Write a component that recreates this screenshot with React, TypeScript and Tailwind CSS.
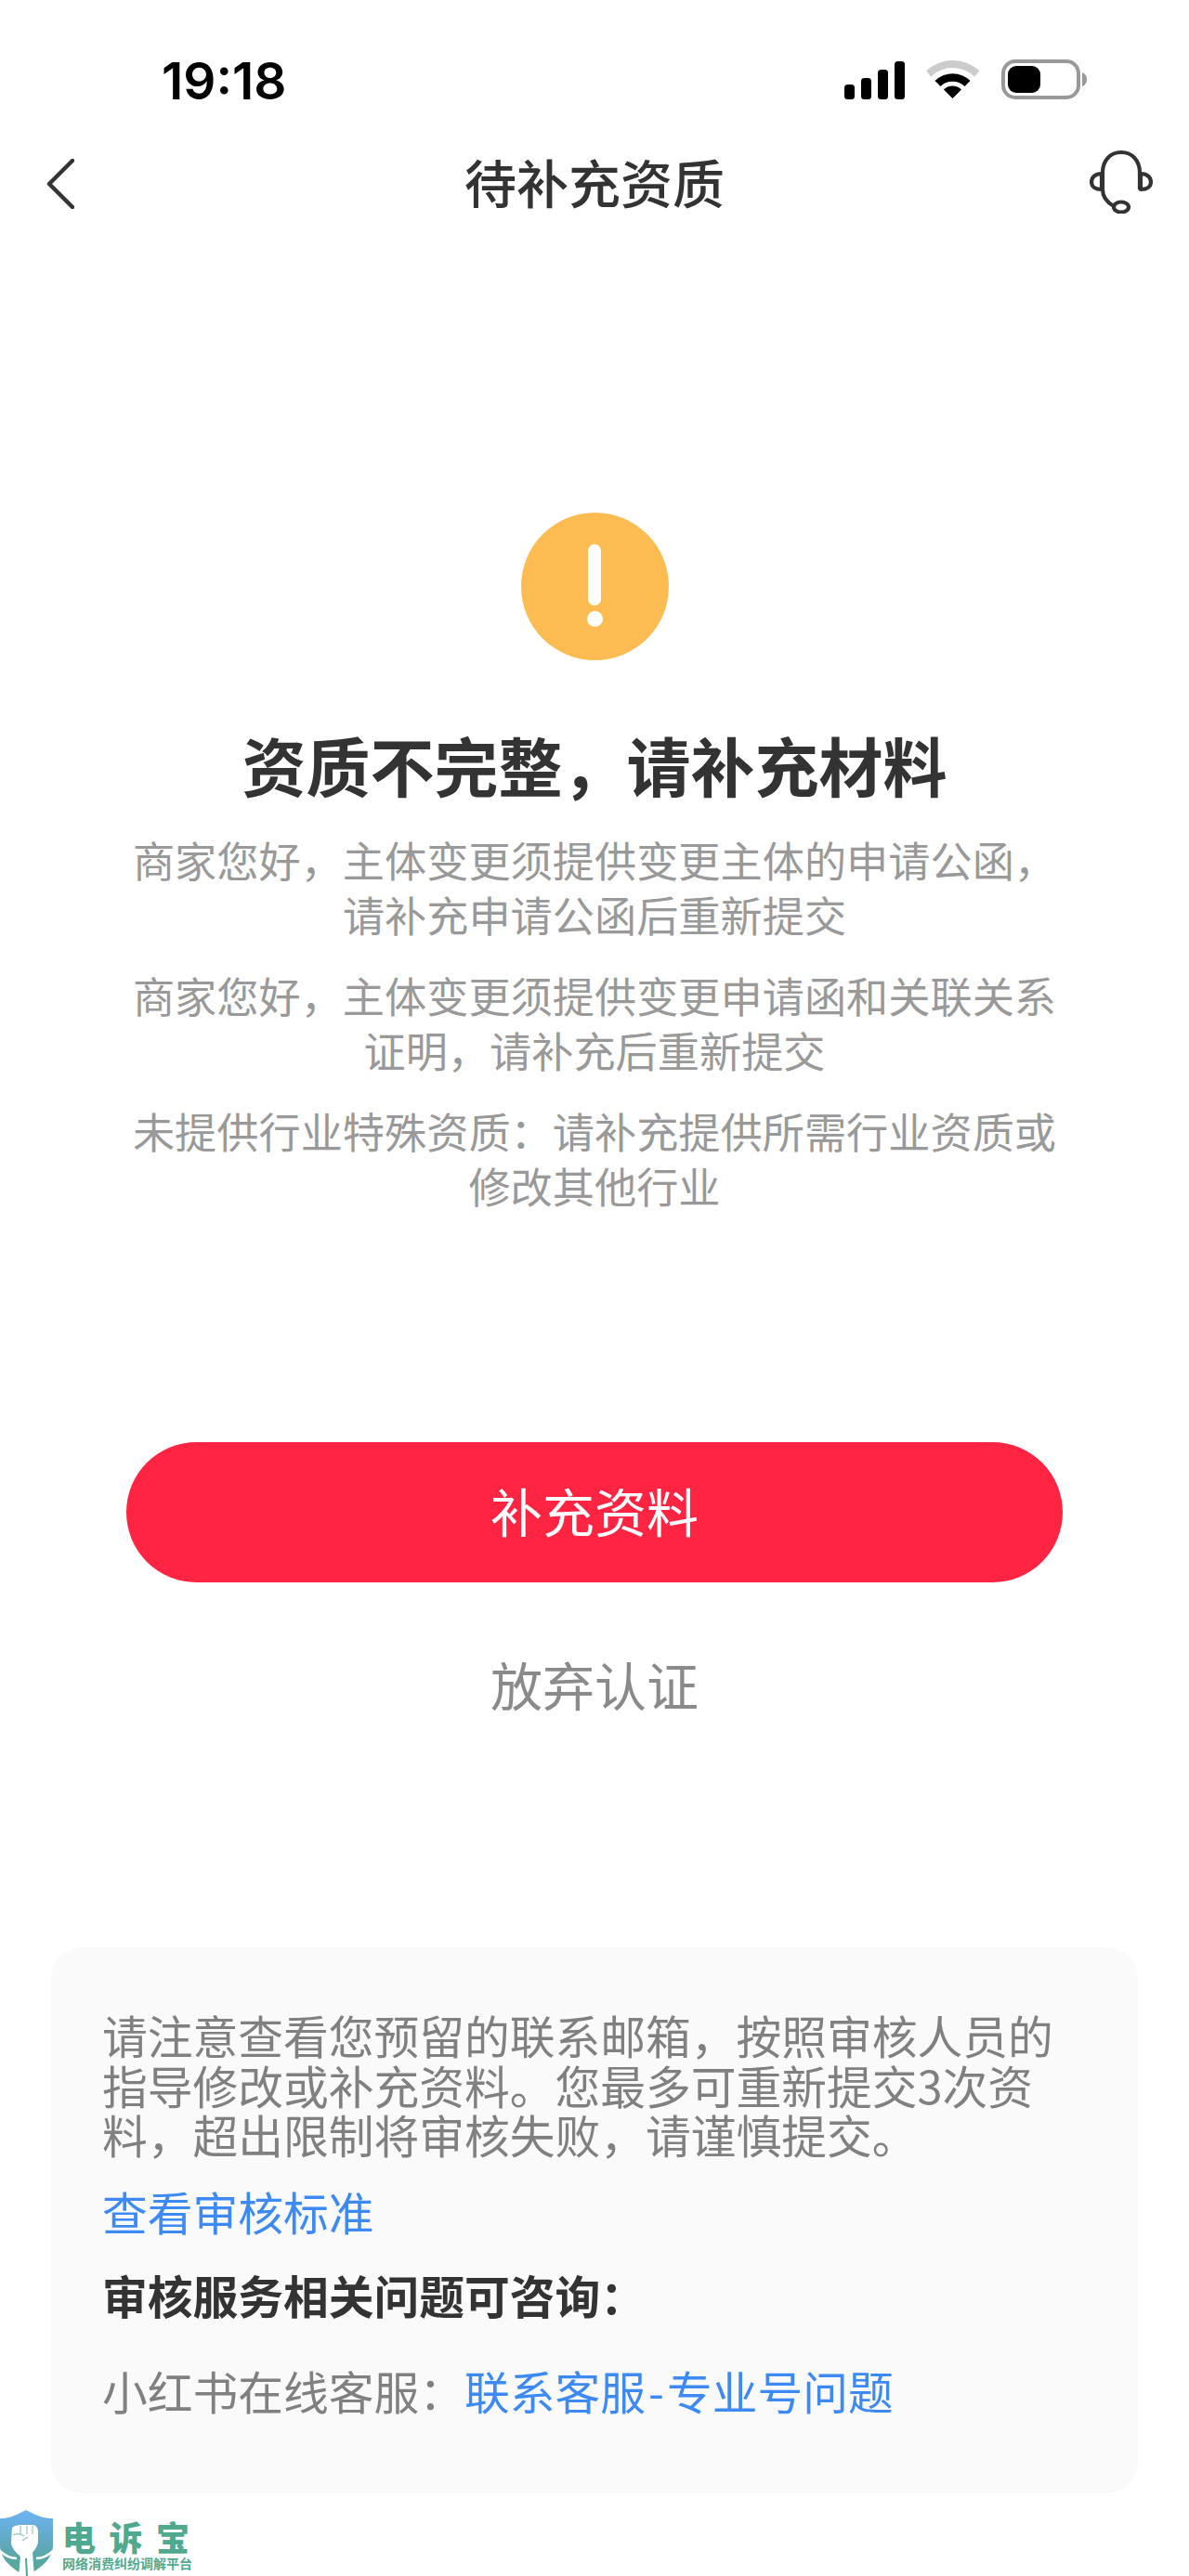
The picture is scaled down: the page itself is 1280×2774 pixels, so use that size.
const font = "font-['Noto_Sans_CJK_SC','Noto_Sans',sans-serif]";

function SignalIcon() {
  return (
    <svg width="65" height="41" viewBox="0 0 65 41" fill="#000">
      <rect x="0" y="25" width="11" height="16" rx="3.5" />
      <rect x="18" y="18" width="11" height="23" rx="3.5" />
      <rect x="36" y="9" width="11" height="32" rx="3.5" />
      <rect x="54" y="0" width="11" height="41" rx="3.5" />
    </svg>
  );
}

function WifiIcon() {
  return (
    <svg width="58" height="43" viewBox="0 0 58 43">
      <path d="M0 12.3A42 42 0 0 1 57.4 12.3L52 18.7A33 33 0 0 0 5.4 18.7Z" fill="#cccccc" />
      <path d="M9.5 23A27 27 0 0 1 47.5 23L41.5 29A18.5 18.5 0 0 0 15.5 29Z" fill="#000" />
      <path d="M28.5 42L19 32.5A13.5 13.5 0 0 1 38 32.5Z" fill="#000" />
    </svg>
  );
}

function BatteryIcon() {
  return (
    <svg width="92" height="43" viewBox="0 0 92 43">
      <rect x="2" y="2" width="81" height="39" rx="13" fill="none" stroke="#999999" strokeWidth="4" />
      <rect x="7" y="7" width="35" height="29" rx="9" fill="#000" />
      <path d="M87 14C90 15 92 18 92 21.5C92 25 90 28 87 29Z" fill="#999999" />
    </svg>
  );
}

function BackIcon() {
  return (
    <svg width="30" height="54" viewBox="0 0 30 54" fill="none" stroke="#333333" strokeWidth="4.5" strokeLinecap="round" strokeLinejoin="round">
      <path d="M28 2L3 27L28 52" />
    </svg>
  );
}

function HeadsetIcon() {
  return (
    <svg width="68" height="70" viewBox="31 20 68 70" fill="none" stroke="#333333" strokeWidth="4.2" strokeLinecap="round" strokeLinejoin="round">
      <path d="M45 64V46C45 33 53 24 65 24C77 24 85 33 85 46V63" />
      <path d="M45 64C45 72 50 78 57 82" />
      <path d="M44 47C37 47 33 51 33 56C33 61 37 64 44 64Z" />
      <path d="M86 47C93 47 97 51 97 56C97 61 93 64 86 64Z" />
      <ellipse cx="65" cy="83" rx="8" ry="5.5" />
    </svg>
  );
}

function ShieldLogo() {
  return (
    <svg width="57" height="71" viewBox="0 0 57 71">
      <defs>
        <linearGradient id="shieldFill" x1="0" y1="0" x2="0" y2="1">
          <stop offset="0" stopColor="#6db3f6" />
          <stop offset="0.55" stopColor="#5fa8b8" />
          <stop offset="1" stopColor="#4fa98e" />
        </linearGradient>
      </defs>
      <path d="M28 0L36 4C42 7 50 9 57 9V38C57 52 44 63 28 71C12 63 0 52 0 38V9C7 9 14 7 20 4Z" fill="url(#shieldFill)" />
      <path d="M0 44C6 50 12 52 18 52M57 44C51 50 45 52 39 52" stroke="#ffffff" strokeWidth="2.5" fill="none" />
      <path d="M13 19C16 16 22 16 25 16H35C39 16 41 19 41 24V33C41 39 37 43 35 46L37 71H20L22 50C18 46 12 42 12 34Z" fill="#ffffff" />
      <path d="M22 17V26M29 17V26M35 17V26M14 27C18 25 23 26 26 28M24 33L30 29" stroke="#9cc4c4" strokeWidth="1.2" fill="none" />
      <path d="M28 52L29 71" stroke="#4fa98e" strokeWidth="2" />
    </svg>
  );
}

export default function App() {
  return (
    <div className={`relative flex h-[2774px] w-[1280px] flex-col overflow-hidden bg-white ${font}`}>
      <div className="flex h-[143px] items-start justify-between pt-[32px]">
        <span className="ml-[174px] font-['Inter',sans-serif] text-[55px] leading-[111px] font-semibold tracking-[0px] text-black">
          19:18
        </span>
        <div className="mt-[32px] mr-[110px] flex items-end">
          <SignalIcon />
          <span className="ml-[23px]">
            <WifiIcon />
          </span>
          <span className="ml-[23px]">
            <BatteryIcon />
          </span>
        </div>
      </div>

      <div className="grid h-[110px] grid-cols-[1fr_auto_1fr] items-center">
        <div className="pl-[50px]">
          <BackIcon />
        </div>
        <h1 className="pb-[6px] text-[56px] leading-[104px] font-medium text-[#333333]">待补充资质</h1>
        <div className="flex justify-end pr-[39px] pb-[6px]">
          <HeadsetIcon />
        </div>
      </div>

      <div className="mt-[299px] flex flex-col items-center">
        <div className="flex h-[159px] w-[159px] flex-col items-center rounded-full bg-[#fdbc52] pt-[34px]">
          <span className="h-[66px] w-[14px] rounded-full bg-white" />
          <span className="mt-[6px] h-[17px] w-[17px] rounded-full bg-white" />
        </div>

        <h2 className="mt-[72px] text-[69px] leading-[80px] font-bold text-[#333333]">资质不完整，请补充材料</h2>

        <div className="mt-[34px] flex w-[1016px] flex-col gap-[29px] text-center text-[45.2px] leading-[58.5px] text-[#999999]">
          <p>商家您好，主体变更须提供变更主体的申请公函，请补充申请公函后重新提交</p>
          <p>商家您好，主体变更须提供变更申请函和关联关系证明，请补充后重新提交</p>
          <p>未提供行业特殊资质：请补充提供所需行业资质或修改其他行业</p>
        </div>

        <button
          type="button"
          className="mt-[247px] h-[151px] w-[1008px] rounded-full bg-[#ff2442] pb-[6px] text-[56px] text-white"
        >
          补充资料
        </button>

        <button type="button" className="mt-[74px] text-[56px] leading-[70px] text-[#8a8a8a]">
          放弃认证
        </button>
      </div>

      <div className="mt-[249px] ml-[55px] h-[588px] w-[1170px] rounded-[34px] bg-[#fafafa] pt-[67px] pr-[85px] pl-[55px] text-[48.75px] leading-[53.5px] text-[#808080]">
        <p>请注意查看您预留的联系邮箱，按照审核人员的指导修改或补充资料。您最多可重新提交3次资料，超出限制将审核失败，请谨慎提交。</p>
        <p className="mt-[29px] text-[#3d8af5]">查看审核标准</p>
        <p className="mt-[37px] font-semibold text-[#333333]">审核服务相关问题可咨询：</p>
        <p className="mt-[49px]">
          小红书在线客服：
          <span className="text-[#3d8af5]">
            联系客服<span className="px-[3px]">-</span>专业号问题
          </span>
        </p>
      </div>

      {/* watermark sits over the page corner */}
      <div className="absolute top-[2703px] left-0 flex">
        <ShieldLogo />
        <div className="ml-[10px] flex flex-col text-[#4fa98e]">
          <span className="mt-[10px] text-[36px] leading-[36px] font-black tracking-[14.5px]">电诉宝</span>
          <span className="mt-[3px] text-[14px] leading-[16px] font-bold">网络消费纠纷调解平台</span>
        </div>
      </div>
    </div>
  );
}
